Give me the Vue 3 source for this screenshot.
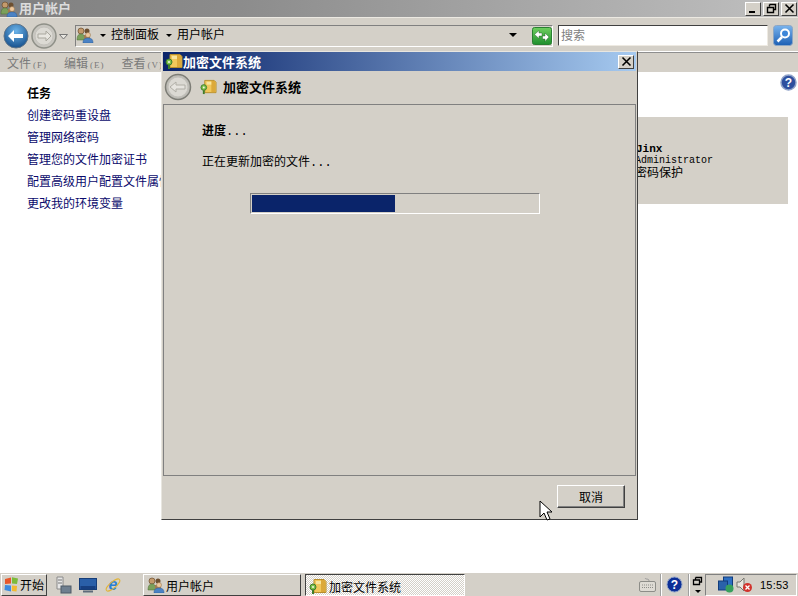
<script setup>
const links = ['创建密码重设盘', '管理网络密码', '管理您的文件加密证书', '配置高级用户配置文件属性', '更改我的环境变量']
const menus = [['文件', '(F)'], ['编辑', '(E)'], ['查看', '(V)']]
</script>

<template>
  <div class="screen">
    <header class="titlebar">
      <svg class="ticon" width="18" height="16" viewBox="0 0 18 16"><use href="#users" /></svg>
      <span class="title">用户帐户</span>
      <div class="winbtns">
        <button class="wbtn"><span class="min"></span></button>
        <button class="wbtn"><svg width="11" height="11" viewBox="0 0 11 11"><path d="M3.500 1.500h6v5h-2M3.500 1.500v2M1.500 4.500h6v5h-6z" fill="none" stroke="#000" stroke-width="1.400"/></svg></button>
        <button class="wbtn"><svg width="11" height="11" viewBox="0 0 11 11"><path d="M1.500 1.500l8 8M9.500 1.500l-8 8" stroke="#000" stroke-width="1.600"/></svg></button>
      </div>
    </header>

    <nav class="navbar">
      <div class="navbtns">
        <svg width="26" height="26" viewBox="0 0 26 26"><defs><radialGradient id="bl" cx=".5" cy=".3" r=".8"><stop offset="0" stop-color="#6cb4ea"/><stop offset="1" stop-color="#0a4280"/></radialGradient></defs><circle cx="13" cy="13" r="12" fill="url(#bl)" stroke="#5f7488"/><path d="M5 13l6-6v4h9v4h-9v4z" fill="#fff"/></svg>
        <svg width="26" height="26" viewBox="0 0 26 26"><circle cx="13" cy="13" r="12" fill="#c8c6c0" stroke="#8f9088" stroke-width="1.500"/><circle cx="13" cy="13" r="9" fill="#dcdad4" stroke="#c4c2bc"/><path d="M20 13l-5-5v3H7v4h8v3z" fill="#e8e6e0" stroke="#aaa89f"/></svg>
        <svg class="drop" width="9" height="6" viewBox="0 0 9 6"><path d="M.5.500h8L4.500 5z" fill="#e8e6e0" stroke="#777"/></svg>
      </div>
      <div class="address">
        <svg class="addr-icon" width="18" height="16" viewBox="0 0 18 16"><use href="#users" /></svg>
        <span class="tri"></span><span class="crumb">控制面板</span><span class="tri"></span><span class="crumb">用户帐户</span>
        <span class="tri end"></span>
        <svg class="refresh" width="20" height="18" viewBox="0 0 20 18"><defs><linearGradient id="gr" x1="0" y1="0" x2="0" y2="1"><stop offset="0" stop-color="#6fcf5f"/><stop offset="1" stop-color="#1f8f2e"/></linearGradient></defs><rect x=".5" y=".5" width="19" height="17" rx="2" fill="url(#gr)" stroke="#2a7f32"/><path d="M2.500 7.500L7 3.500v2.500h3v3H7v2.500zM17 10l-4 4.500V12h-2.500V9H13V6z" fill="#fff" stroke="#14501c" stroke-width=".4"/></svg>
      </div>
      <div class="search">搜索</div>
      <svg class="sicon" width="20" height="21" viewBox="0 0 20 21"><defs><linearGradient id="sb" x1="0" y1="0" x2="0" y2="1"><stop offset="0" stop-color="#79b4ee"/><stop offset="1" stop-color="#1c5fb4"/></linearGradient></defs><rect x=".5" y=".5" width="19" height="20" rx="3" fill="url(#sb)" stroke="#8ca6c4"/><circle cx="12" cy="8.500" r="4" fill="#3d86d8" stroke="#fff" stroke-width="2"/><path d="M9 12l-4.500 4.500" stroke="#fff" stroke-width="2.500"/></svg>
    </nav>

    <div class="menubar">
      <span v-for="m in menus" :key="m[0]" class="menu">{{ m[0] }}<small>{{ m[1] }}</small></span>
    </div>

    <main class="content">
      <aside class="tasks">
        <h2>任务</h2>
        <a v-for="l in links" :key="l">{{ l }}</a>
      </aside>
      <section class="account">
        <b>Jinx</b>
        <span class="role">Administrator</span>
        <span class="pwd">密码保护</span>
      </section>
      <svg class="help" width="17" height="17" viewBox="0 0 17 17"><circle cx="8.500" cy="8.500" r="7.500" fill="#2e4f9e" stroke="#8fa2c8" stroke-width="1.500"/><text x="8.500" y="13" text-anchor="middle" font-size="12" font-weight="700" font-family="Liberation Sans, sans-serif" fill="#fff">?</text></svg>
    </main>

    <footer class="taskbar">
      <button class="start">
        <svg width="17" height="17" viewBox="0 0 17 17"><path d="M2 3l6-1.500v6L2 8z" fill="#e8572a"/><path d="M9 1.200l6 1.300-1 5.500-5-.5z" fill="#7cbb3a"/><path d="M2 9l6 .5v6L1.500 14z" fill="#3d8be0"/><path d="M9 9.500l5 .5-.5 5.500-4.500-.5z" fill="#f2b92e"/></svg>
        开始
      </button>
      <div class="quick">
        <svg width="16" height="18" viewBox="0 0 16 18"><path d="M1 1h6v12H1z" fill="#e6e6e6" stroke="#8a8a8a"/><path d="M2 4h4M2 7h4" stroke="#777"/><rect x="5" y="10" width="10" height="7" fill="#6f7f8f" stroke="#4e5a66"/></svg>
        <svg width="18" height="16" viewBox="0 0 18 16"><rect x=".5" y="1.500" width="17" height="11" fill="#2a5fa8" stroke="#163d78"/><rect x="1.500" y="9" width="15" height="3" fill="#173f80"/><path d="M4 14.500h10" stroke="#5d6b7a" stroke-width="2"/></svg>
        <svg width="18" height="18" viewBox="0 0 18 18"><text x="9" y="14" text-anchor="middle" font-size="16" font-weight="700" font-style="italic" font-family="Liberation Sans, sans-serif" fill="#2a7fd4">e</text><ellipse cx="9" cy="9" rx="8.500" ry="3" transform="rotate(-40 9 9)" fill="none" stroke="#e0b43a" stroke-width="1"/></svg>
      </div>
      <button class="task">
        <svg width="18" height="16" viewBox="0 0 18 16"><use href="#users" /></svg>
        用户帐户
      </button>
      <button class="task active">
        <svg width="18" height="17" viewBox="0 0 18 17"><use href="#efs" /></svg>
        加密文件系统
      </button>
      <div class="spacer"></div>
      <svg class="kbd" width="17" height="15" viewBox="0 0 17 15"><path d="M10 4c0-3-3-1-4-3" fill="none" stroke="#999"/><rect x=".5" y="4.500" width="16" height="10" rx="1.500" fill="#dedbd4" stroke="#8d8d88"/><path d="M3 8h11M3 10.500h11" stroke="#8d8d88" stroke-dasharray="1 1"/></svg>
      <span class="sep"></span>
      <svg class="tray-help" width="17" height="17" viewBox="0 0 17 17"><circle cx="8.500" cy="8.500" r="7.500" fill="#0d2f96" stroke="#8fa2c8"/><text x="8.500" y="13" text-anchor="middle" font-size="12" font-weight="700" font-family="Liberation Sans, sans-serif" fill="#fff">?</text></svg>
      <span class="sep"></span>
      <div class="bar-tool">
        <svg width="11" height="10" viewBox="0 0 11 10"><path d="M3.500 1.500h6v4.500h-2M3.500 1.500v2M1.500 4h6v4.500h-6z" fill="none" stroke="#000" stroke-width="1.300"/></svg>
        <span class="mini-tri"></span>
      </div>
      <div class="tray">
        <svg width="17" height="17" viewBox="0 0 17 17"><rect x="5.500" y="1" width="9" height="10" fill="#2d6fc2" stroke="#123c7c"/><rect x=".5" y="5" width="9" height="9" fill="#2a62aa" stroke="#123c7c"/><circle cx="11.500" cy="12.500" r="4" fill="#37a05d"/></svg>
        <svg width="17" height="17" viewBox="0 0 17 17"><path d="M1 6h3l4-4v13l-4-4H1z" fill="#e8e6e0" stroke="#77766f"/><circle cx="11.500" cy="11.500" r="4.500" fill="#d2322c"/><path d="M9.500 9.500l4 4M13.500 9.500l-4 4" stroke="#fff" stroke-width="1.300"/></svg>
        <span class="clock">15:53</span>
      </div>
    </footer>

    <div class="dialog">
      <div class="dlg-title">
        <svg width="18" height="17" viewBox="0 0 18 17"><use href="#efs" /></svg>
        <span>加密文件系统</span>
        <button class="wbtn dlg-close"><svg width="11" height="11" viewBox="0 0 11 11"><path d="M1.500 1.500l8 8M9.500 1.500l-8 8" stroke="#000" stroke-width="1.600"/></svg></button>
      </div>
      <div class="dlg-head">
        <svg width="28" height="28" viewBox="0 0 28 28"><circle cx="14" cy="14" r="12.500" fill="#bdbcb6" stroke="#7d7d76" stroke-width="1.500"/><circle cx="14" cy="14" r="10" fill="#dbd9d3" stroke="#c2c0ba"/><path d="M6 14l6-5v3h9v4h-9v3z" fill="#e6e4df" stroke="#b0aea6"/></svg>
        <svg width="17" height="16" viewBox="0 0 18 17"><use href="#efs" /></svg>
        <strong>加密文件系统</strong>
      </div>
      <div class="dlg-body">
        <h3>进度<span class="dots">...</span></h3>
        <p>正在更新加密的文件<span class="dots">...</span></p>
        <div class="progress"><div class="fill"></div></div>
      </div>
      <div class="dlg-foot"><button class="cancel">取消</button></div>
    </div>

    <svg class="cursor" width="14" height="22" viewBox="0 0 14 22"><path d="M1 1v16l4-4 3 7 3-1-3-7h5z" fill="#fff" stroke="#000"/></svg>

    <svg width="0" height="0" class="defs">
      <defs>
        <symbol id="users" viewBox="0 0 18 16">
          <circle cx="5" cy="4" r="3" fill="#c49a6c" stroke="#6a4c2c" stroke-width=".7"/>
          <path d="M1 13c0-5 2-6 4-6s4 1 4 6z" fill="#7ba05b" stroke="#4d6c35" stroke-width=".5"/>
          <circle cx="11" cy="4" r="2.500" fill="#6d4f30"/>
          <path d="M8 8h6v4H8z" fill="#a27b50"/>
          <circle cx="12" cy="8" r="2.500" fill="#efc79b" stroke="#8a6a44" stroke-width=".5"/>
          <path d="M7 16c0-4 2-5 5-5s5 1 5 5z" fill="#4b82c4" stroke="#2b5a94" stroke-width=".5"/>
        </symbol>
        <symbol id="efs" viewBox="0 0 18 17">
          <path d="M5 1.500h10l2 2v11H5z" fill="#f1c75b" stroke="#b78e2c"/>
          <path d="M12 2h4v12h-4z" fill="#dca93a"/>
          <path d="M7 3h5v3H7z" fill="#f8e49d"/>
          <circle cx="4" cy="9" r="3" fill="#7cc14a" stroke="#3f7d2a"/>
          <circle cx="4" cy="9" r="1" fill="#f1f6e5"/>
          <path d="M4 12v4" stroke="#3f7d2a" stroke-width="2"/>
        </symbol>
      </defs>
    </svg>
  </div>
</template>

<style>
html, body { margin: 0; padding: 0; background: #fff; }
</style>

<style scoped>
.screen {
  position: relative;
  width: 798px;
  height: 596px;
  overflow: hidden;
  display: flex;
  flex-direction: column;
  background: #fff;
  font-family: "Noto Sans CJK SC", "Liberation Sans", sans-serif;
  font-size: 12px;
  color: #000;
}
button { font: inherit; color: inherit; padding: 0; margin: 0; }
.defs { position: absolute; }
.titlebar {
  height: 17px;
  flex: none;
  display: flex;
  align-items: center;
  background: linear-gradient(90deg, #808080 0%, #8c8c8c 30%, #c0c0c0 100%);
  border-bottom: 1px solid #ece9e2;
}
.ticon { margin: 0 1px 0 0; }
.title { color: #dcdcdc; font-weight: 700; font-size: 13px; margin-bottom: 2px; }
.winbtns { margin-left: auto; display: flex; padding-right: 1px; }
.wbtn {
  width: 16px;
  height: 14px;
  background: #d4d0c8;
  border: 1px solid;
  border-color: #fff #404040 #404040 #fff;
  display: flex;
  align-items: center;
  justify-content: center;
  box-sizing: border-box;
}
.winbtns .wbtn + .wbtn { margin-left: 2px; }
.min { width: 6px; height: 2px; background: #000; margin-top: 7px; margin-right: 2px; }
.navbar {
  height: 34px;
  flex: none;
  display: flex;
  align-items: center;
  background: #d4d0c8;
  border-bottom: 1px solid #fff;
  box-sizing: border-box;
  padding-top: 3px;
}
.navbtns { display: flex; align-items: center; width: 75px; padding-left: 3px; box-sizing: border-box; }
.navbtns svg + svg { margin-left: 2px; }
.drop { margin-top: 2px; }
.address {
  width: 478px;
  height: 22px;
  flex: none;
  display: flex;
  align-items: center;
  box-sizing: border-box;
  border: 1px solid;
  border-color: #808080 #fff #fff #808080;
  font-size: 12px;
  margin-bottom: 1px;
  padding-bottom: 2px;
}
.addr-icon { margin-right: 6px; }
.tri {
  width: 0; height: 0;
  border: 3px solid transparent;
  border-top: 3px solid #000;
  border-bottom: 0;
  margin: 1px 5px 0 0;
}
.tri.end { margin: 0 15px 0 auto; border-width: 4px 4px 0; }
.crumb { margin-right: 7px; margin-bottom: 2px; }
.refresh { margin-top: 2px; margin-right: 0; }
.search {
  width: 210px;
  height: 21px;
  margin-left: 5px;
  margin-bottom: 1px;
  box-sizing: border-box;
  background: #fff;
  border: 1px solid;
  border-color: #404040 #eeeae2 #eeeae2 #404040;
  color: #808080;
  font-size: 12px;
  line-height: 18px;
  padding-left: 2px;
}
.sicon { margin-left: 5px; margin-bottom: 1px; }
.menubar {
  height: 20px;
  flex: none;
  display: flex;
  background: #d4d0c8;
  color: #7a7a7a;
  align-items: center;
  padding-left: 7px;
  gap: 17px;
  box-sizing: border-box;
  border-top: 1px solid #8e8e8e;
}
.menu small { font-size: 9px; margin-left: 2px; letter-spacing: 1px; font-family: "Liberation Serif", serif; }
.content {
  flex: 1;
  position: relative;
  display: flex;
  background: #fff;
}
.tasks { width: 162px; padding: 13px 0 0 27px; box-sizing: border-box; display: flex; flex-direction: column; white-space: nowrap; }
.tasks h2 { margin: 0 0 3px; font-size: 12px; line-height: 16px; font-weight: 700; }
.tasks a { color: #0a0a6c; line-height: 22px; height: 22px; }
.account {
  position: absolute;
  left: 637px;
  top: 45px;
  width: 151px;
  height: 87px;
  background: #d4d0c8;
  display: flex;
  flex-direction: column;
  padding-top: 26px;
  box-sizing: border-box;
  white-space: nowrap;
}
.account b { font: 700 11px/13px "Liberation Mono", monospace; margin-left: -1px; }
.role { font: 10px/10px "Liberation Mono", monospace; margin-left: -2px; }
.pwd { font-size: 12px; line-height: 12px; margin-left: -2px; }
.help { position: absolute; right: 1px; top: 2px; }
.taskbar {
  height: 24px;
  flex: none;
  display: flex;
  align-items: center;
  background: #d4d0c8;
  border-top: 1px solid #fff;
  box-shadow: 0 -1px 0 #d4d0c8;
  box-sizing: border-box;
}
.start {
  width: 46px;
  height: 22px;
  margin-left: 1px;
  display: flex;
  align-items: center;
  background: #d4d0c8;
  border: 1px solid;
  border-color: #fff #404040 #404040 #fff;
  font-size: 12px;
  padding-left: 1px;
  box-sizing: border-box;
}
.quick { display: flex; align-items: center; gap: 7px; width: 96px; padding-left: 9px; box-sizing: border-box; }
.task {
  height: 22px;
  width: 158px;
  display: flex;
  align-items: center;
  gap: 1px;
  padding: 1px 0 0 3px;
  background: #d4d0c8;
  border: 1px solid;
  border-color: #fff #404040 #404040 #fff;
  box-sizing: border-box;
  margin-right: 4px;
  font-size: 12px;
}
.task.active {
  width: 160px;
  margin-right: 0;
  gap: 2px;
  border-color: #404040 #fff #fff #404040;
  background: repeating-conic-gradient(#fff 0 25%, #d4d0c8 0 50%) 0 0 / 2px 2px;
  padding-top: 3px;
}
.spacer { flex: 1; }
.kbd { margin-right: 4px; }
.sep { width: 1px; height: 22px; background: #a0a0a0; border-right: 1px solid #fff; }
.tray-help { margin: 0 5px 0 4px; }
.bar-tool { width: 15px; display: flex; flex-direction: column; align-items: center; gap: 4px; }
.mini-tri { width: 0; height: 0; border: 3px solid transparent; border-top: 3px solid #000; border-bottom: 0; }
.tray {
  width: 92px;
  height: 22px;
  display: flex;
  align-items: center;
  box-sizing: border-box;
  border: 1px solid;
  border-color: #808080 #fff #fff #808080;
  padding-left: 12px;
  margin-right: 1px;
}
.tray svg + svg { margin-left: 1px; }
.clock { font: 11px "Liberation Sans", sans-serif; margin: 1px 0 0 7px; letter-spacing: .2px; }
.dialog {
  position: absolute;
  left: 161px;
  top: 51px;
  width: 477px;
  height: 469px;
  box-sizing: border-box;
  background: #d4d0c8;
  border: 1px solid;
  border-color: #e8e6e0 #404040 #404040 #e8e6e0;
  padding: 0 1px 1px;
  display: flex;
  flex-direction: column;
}
.dlg-title {
  height: 19px;
  flex: none;
  display: flex;
  align-items: center;
  background: linear-gradient(90deg, #0a246a, #a6caf0);
  color: #fff;
  font-weight: 700;
  font-size: 13px;
  padding-left: 2px;
  padding-right: 2px;
}
.dlg-close { margin-left: auto; color: #000; }
.dlg-head {
  height: 31px;
  margin-bottom: 2px;
  flex: none;
  display: flex;
  align-items: center;
  box-sizing: border-box;
  padding-left: 1px;
}
.dlg-head strong { font-size: 13px; margin-left: 6px; }
.dlg-head svg + svg { margin-left: 8px; }
.dlg-body {
  height: 372px;
  flex: none;
  box-sizing: border-box;
  border: 1px solid #808080;
  padding: 17px 0 0 38px;
}
.dlg-body h3 { margin: 0; font-size: 12px; line-height: 16px; font-weight: 700; }
.dlg-body p { margin: 14px 0 0; font-size: 12px; line-height: 16px; }
.dots { font: 400 12px "Liberation Mono", monospace; }
.progress {
  width: 290px;
  height: 21px;
  margin: 23px 0 0 48px;
  box-sizing: border-box;
  border: 1px solid;
  border-color: #808080 #fff #fff #808080;
  padding: 1px;
}
.fill { width: 143px; height: 100%; background: #0a246a; }
.dlg-foot { flex: 1; display: flex; justify-content: flex-end; align-items: flex-start; padding: 9px 11px 0 0; }
.cancel {
  width: 68px;
  height: 23px;
  background: #d4d0c8;
  border: 1px solid;
  border-color: #fff #404040 #404040 #fff;
  box-shadow: inset -1px -1px 0 #808080;
  font-size: 12px;
}
.cursor { position: absolute; left: 539px; top: 500px; }
</style>
